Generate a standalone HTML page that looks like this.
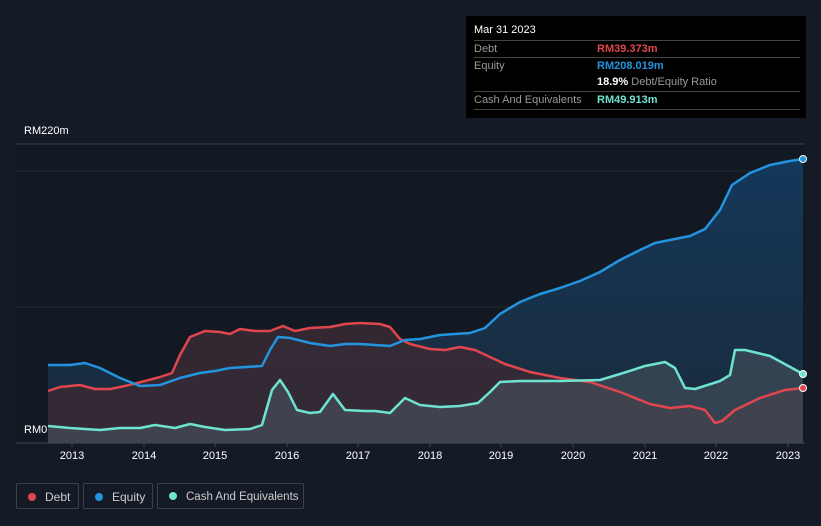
<!DOCTYPE html><html><head><style>
body{margin:0;width:821px;height:526px;background:#151b26;font-family:"Liberation Sans",sans-serif;overflow:hidden;position:relative}
.tt{position:absolute;left:466px;top:16px;width:340px;height:102px;background:#000;color:#fff;font-size:11px}
.r{position:absolute;left:8px;right:6px;border-top:1px solid #444;height:17px;line-height:17px;color:#999}
.v{position:absolute;left:123px}
.lg{position:absolute;top:483px;height:26px;border:1px solid #3c4048;border-radius:2px;color:#ccc;font-size:12px;line-height:26px;box-sizing:border-box;white-space:nowrap}
.dot{display:inline-block;width:8px;height:8px;border-radius:50%;margin:0 9px 0 11px}
.yr{position:absolute;top:450px;color:#fff;font-size:11px;transform:translateX(-50%)}
</style></head><body>
<svg width="821" height="526" style="position:absolute;left:0;top:0">
<defs>
<linearGradient id="ge" x1="0" y1="0" x2="0" y2="1"><stop offset="0" stop-color="#14385a"/><stop offset="1" stop-color="#1a2a3a"/></linearGradient>
</defs>
<rect x="16" y="144" width="789" height="299" fill="#131922"/>
<line x1="16" y1="144" x2="805" y2="144" stroke="#3a3f48"/>
<line x1="16" y1="171" x2="805" y2="171" stroke="#252a33"/>
<line x1="16" y1="307" x2="805" y2="307" stroke="#252a33"/>
<polygon fill="url(#ge)" points="48,443 48,365 70,365 85,363 100,368 120,378 140,386 160,385 180,378 200,373 215,371 230,368 262,366 270,350 278,337 290,338 310,343 330,346 345,344 360,344 375,345 390,346 405,340 420,339 440,335 470,333 485,328 500,314 520,302 540,294 560,288 580,281 600,272 620,260 640,250 655,243 670,240 690,236 705,229 720,210 732,185 750,173 770,165 790,161 803,159 803,443"/>
<polygon fill="#3a2a35" opacity="0.85" points="48,443 48,391 60,387 80,385 95,389 110,389 125,386 145,381 160,377 172,373 180,355 190,337 205,331 220,332 230,334 240,329 255,331 270,331 283,326 295,331 310,328 330,327 345,324 360,323 380,324 390,327 400,339 410,344 430,349 445,350 460,347 475,350 490,357 505,364 530,372 560,378 590,382 620,392 650,404 670,408 690,406 705,410 715,423 722,421 735,410 760,398 785,390 803,388 803,443"/>
<polygon fill="#4a5560" opacity="0.55" points="48,443 48,426 70,428 100,430 120,428 140,428 155,425 175,428 190,424 205,427 225,430 250,429 262,425 272,390 280,380 288,392 297,410 310,413 320,412 333,394 345,410 365,411 375,411 390,413 405,398 420,405 440,407 460,406 478,403 490,392 500,382 520,381 560,381 600,380 620,374 645,366 665,362 675,368 685,388 695,389 720,381 730,375 735,350 745,350 770,356 803,374 803,443"/>
<g fill="none" stroke-width="2.5" stroke-linejoin="round">
<polyline stroke="#e0464e" points="48,391 60,387 80,385 95,389 110,389 125,386 145,381 160,377 172,373 180,355 190,337 205,331 220,332 230,334 240,329 255,331 270,331 283,326 295,331 310,328 330,327 345,324 360,323 380,324 390,327 400,339 410,344 430,349 445,350 460,347 475,350 490,357 505,364 530,372 560,378 590,382 620,392 650,404 670,408 690,406 705,410 715,423 722,421 735,410 760,398 785,390 803,388"/>
<polyline stroke="#2394df" points="48,365 70,365 85,363 100,368 120,378 140,386 160,385 180,378 200,373 215,371 230,368 262,366 270,350 278,337 290,338 310,343 330,346 345,344 360,344 375,345 390,346 405,340 420,339 440,335 470,333 485,328 500,314 520,302 540,294 560,288 580,281 600,272 620,260 640,250 655,243 670,240 690,236 705,229 720,210 732,185 750,173 770,165 790,161 803,159"/>
<polyline stroke="#6ee3d0" points="48,426 70,428 100,430 120,428 140,428 155,425 175,428 190,424 205,427 225,430 250,429 262,425 272,390 280,380 288,392 297,410 310,413 320,412 333,394 345,410 365,411 375,411 390,413 405,398 420,405 440,407 460,406 478,403 490,392 500,382 520,381 560,381 600,380 620,374 645,366 665,362 675,368 685,388 695,389 720,381 730,375 735,350 745,350 770,356 803,374"/>
</g>
<line x1="16" y1="443" x2="805" y2="443" stroke="#444a52"/>
<g stroke="#444a52"><line x1="72" y1="443" x2="72" y2="447"/><line x1="144" y1="443" x2="144" y2="447"/><line x1="215" y1="443" x2="215" y2="447"/><line x1="287" y1="443" x2="287" y2="447"/><line x1="358" y1="443" x2="358" y2="447"/><line x1="430" y1="443" x2="430" y2="447"/><line x1="501" y1="443" x2="501" y2="447"/><line x1="573" y1="443" x2="573" y2="447"/><line x1="645" y1="443" x2="645" y2="447"/><line x1="716" y1="443" x2="716" y2="447"/><line x1="788" y1="443" x2="788" y2="447"/></g>
<circle cx="803" cy="159" r="3.5" fill="#2394df" stroke="#fff" stroke-width="1"/>
<circle cx="803" cy="388" r="3.5" fill="#e0464e" stroke="#fff" stroke-width="1"/>
<circle cx="803" cy="374" r="3.5" fill="#6ee3d0" stroke="#fff" stroke-width="1"/>
</svg>
<div style="position:absolute;left:24px;top:125px;color:#fff;font-size:11px">RM220m</div>
<div style="position:absolute;left:24px;top:424px;color:#fff;font-size:11px">RM0</div>
<div class="yr" style="left:72px">2013</div><div class="yr" style="left:144px">2014</div><div class="yr" style="left:215px">2015</div><div class="yr" style="left:287px">2016</div><div class="yr" style="left:358px">2017</div><div class="yr" style="left:430px">2018</div><div class="yr" style="left:501px">2019</div><div class="yr" style="left:573px">2020</div><div class="yr" style="left:645px">2021</div><div class="yr" style="left:716px">2022</div><div class="yr" style="left:788px">2023</div>
<div class="tt">
<div style="position:absolute;left:8px;top:8px;font-size:11px">Mar 31 2023</div>
<div class="r" style="top:24px">Debt<span class="v" style="color:#e0464e;font-weight:bold">RM39.373m</span></div>
<div class="r" style="top:41px">Equity<span class="v" style="color:#2394df;font-weight:bold">RM208.019m</span></div>
<div class="r" style="top:58px;border:0"><span class="v"><b style="color:#fff">18.9%</b> Debt/Equity Ratio</span></div>
<div class="r" style="top:75px;border-bottom:1px solid #444">Cash And Equivalents<span class="v" style="color:#6ee3d0;font-weight:bold">RM49.913m</span></div>
</div>
<div class="lg" style="left:16px;width:63px"><span class="dot" style="background:#e0464e"></span>Debt</div>
<div class="lg" style="left:83px;width:70px"><span class="dot" style="background:#2394df"></span>Equity</div>
<div class="lg" style="left:157px;width:147px;font-size:11.5px"><span class="dot" style="background:#6ee3d0"></span>Cash And Equivalents</div>
</body></html>
